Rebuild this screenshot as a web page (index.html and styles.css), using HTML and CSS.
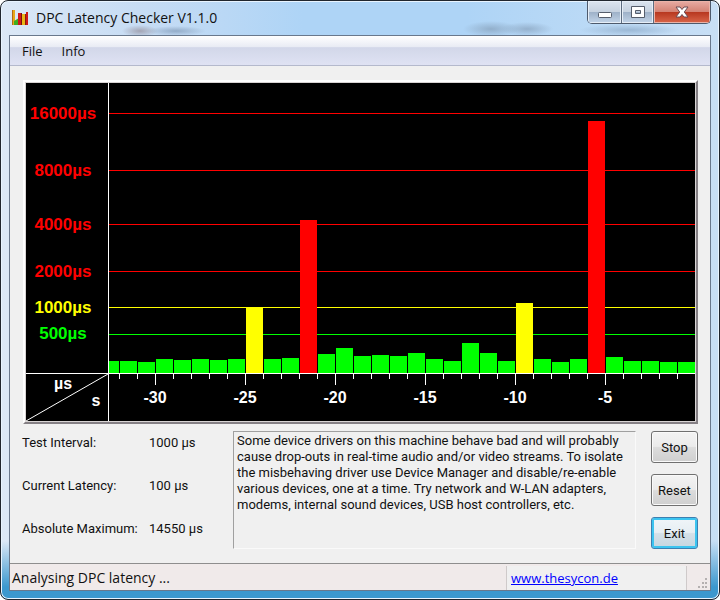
FILE: index.html
```html
<!DOCTYPE html>
<html lang="en">
<head>
  <meta charset="UTF-8">
  <meta name="viewport" content="width=device-width, initial-scale=1.0">
  <title>DPC Latency Checker V1.1.0</title>
  <link rel="stylesheet" href="styles.css">
</head>
<body>

  <div class="window">
    <header class="titlebar">
      <svg class="app-icon" width="18" height="18" viewBox="0 0 18 18">
        <path d="M1 1h3v15h-3z" fill="#e8a818"/>
        <path d="M1 1h1v15h-1z" fill="#b06a18"/>
        <path d="M3 12l5-3v7h-5z" fill="#3fae20"/>
        <path d="M7 4h3v12h-3zM15 3h2v13h-2z" fill="#d01818"/>
        <path d="M10 4h1v12h-1z" fill="#7a1010"/>
        <path d="M11 5h3v11h-3z" fill="#e8b818"/>
        <path d="M14 5h1v11h-1z" fill="#8a1a10"/>
      </svg>
      <h1>DPC Latency Checker V1.1.0</h1>
      <div class="window-controls">
        <button type="button" class="control minimize" aria-label="Minimize">
          <svg width="16" height="16" viewBox="0 0 16 16"><rect x="1.5" y="8.5" width="13" height="5" rx="1" fill="#fff" stroke="#555d6b"/></svg>
        </button>
        <button type="button" class="control maximize" aria-label="Maximize">
          <svg width="16" height="16" viewBox="0 0 16 16"><path d="M1.5 2.5h13v11h-13zM5.5 6.5v3h5v-3z" fill="#fff" fill-rule="evenodd" stroke="#555d6b"/></svg>
        </button>
        <button type="button" class="control close" aria-label="Close">
          <svg width="16" height="16" viewBox="0 0 16 16"><path d="M2 3h4l2 2.500 2-2.500h4l-3.700 5 3.700 5h-4l-2-2.500-2 2.500h-4l3.700-5z" fill="#fff" stroke="#6b4a52"/></svg>
        </button>
      </div>
    </header>

    <div class="client">
      <nav class="menu">
        <button type="button">File</button>
        <button type="button">Info</button>
      </nav>

      <main class="content">
        <div class="chart-frame">
          <svg id="chart" class="chart" viewBox="0 0 669 338" role="img" aria-label="DPC latency over time">
            <g class="red">
              <rect x="82" y="30" width="587" height="1"/>
              <rect x="82" y="87" width="587" height="1"/>
              <rect x="82" y="141" width="587" height="1"/>
              <rect x="82" y="188" width="587" height="1"/>
              <text x="37" y="36">16000µs</text>
              <text x="37" y="93">8000µs</text>
              <text x="37" y="147">4000µs</text>
              <text x="37" y="194">2000µs</text>
            </g>
            <g class="yellow">
              <rect x="82" y="224" width="587" height="1"/>
              <text x="37" y="230">1000µs</text>
            </g>
            <g class="green">
              <rect x="82" y="251" width="587" height="1"/>
              <text x="37" y="256">500µs</text>
            </g>
            <g id="bars"></g>
            <g id="axis" class="axis">
              <rect x="82" y="0" width="1" height="338"/>
              <rect x="0" y="290" width="669" height="1"/>
              <line x1="0" x2="82" y1="338" y2="291"/>
              <text x="37" y="306">µs</text>
              <text x="70" y="323">s</text>
            </g>
          </svg>
        </div>

        <section class="details">
          <dl class="readings">
            <dt>Test Interval:</dt><dd>1000 µs</dd>
            <dt>Current Latency:</dt><dd>100 µs</dd>
            <dt>Absolute Maximum:</dt><dd>14550 µs</dd>
          </dl>
          <p class="message">Some device drivers on this machine behave bad and will probably cause drop-outs in real-time audio and/or video streams. To isolate the misbehaving driver use Device Manager and disable/re-enable various devices, one at a time. Try network and W-LAN adapters, modems, internal sound devices, USB host controllers, etc.</p>
          <div class="actions">
            <button type="button">Stop</button>
            <button type="button">Reset</button>
            <button type="button" class="default">Exit</button>
          </div>
        </section>
      </main>

      <footer class="statusbar">
        <span class="status-text">Analysing DPC latency ...</span>
        <span class="status-link"><a href="http://www.thesycon.de">www.thesycon.de</a></span>
        <span class="status-grip">
          <svg width="10" height="10" viewBox="0 0 10 10" fill="#b4b0b0"><path d="M7 0h2v2h-2zM4 4h2v2h-2zM7 4h2v2h-2zM0 8h2v2h-2zM4 8h2v2h-2zM7 8h2v2h-2z"/></svg>
        </span>
      </footer>
    </div>
  </div>

  <script src="chart.js"></script>
</body>
</html>
```
FILE: styles.css
```css
* {
  box-sizing: border-box;
}
body {
  margin: 0;
  background: #fff;
  color: #111;
  font-family: "Open Sans", "Noto Sans", sans-serif;
  font-size: 13px;
}
button {
  font: inherit;
  color: inherit;
}
.window {
  display: flex;
  flex-direction: column;
  min-height: 100vh;
  padding: 0 8px 8px;
  border: 1px solid #20262e;
  border-radius: 8px;
  background:
    radial-gradient(ellipse 18px 6px at 139px 30px, #a3a5b4 0%, transparent 100%),
    radial-gradient(ellipse 30px 5px at 175px 30px, #93acc8 0%, transparent 100%),
    radial-gradient(ellipse 28px 8px at 490px 28px, #92afcb 0%, transparent 100%),
    radial-gradient(ellipse 26px 7px at 526px 28px, #95b1cd 0%, transparent 100%),
    radial-gradient(ellipse 50px 6px at 628px 29px, #9bb8d5 0%, transparent 100%),
    linear-gradient(to bottom, transparent 540px, #3c98ce 98%),
    linear-gradient(to right, #dce8f6 0, #c6dcf4 20%, #aed4f6 42%, #aed4f6 65%, #c8dff5 100%);
  box-shadow: inset 0 0 0 1px #e8f4ff;
}
.titlebar {
  display: flex;
  align-items: center;
  height: 34px;
}
.app-icon {
  margin-left: 2px;
}
h1 {
  flex: 1;
  margin: 0 0 2px 7px;
  font-size: 14px;
  font-weight: 400;
  white-space: nowrap;
}
.window-controls {
  display: flex;
  align-self: flex-start;
  height: 23px;
  border: 1px solid #4e5a6c;
  border-top: 0;
  border-radius: 0 0 5px 5px;
  overflow: hidden;
}
.control {
  display: flex;
  align-items: center;
  justify-content: center;
  width: 34px;
  padding: 0;
  border: 0;
  border-right: 1px solid #5d6c80;
  background: linear-gradient(to bottom, #dbe4ef 0%, #c6d2e0 48%, #9fb2c9 52%, #c2d4e8 100%);
  box-shadow: inset 0 0 0 1px #e6eef7;
}
.control.maximize {
  width: 32px;
}
.control.close {
  width: 56px;
  border-right: 0;
  background: linear-gradient(to bottom, #e8aca4 0%, #d48375 48%, #b83820 52%, #d9664a 100%);
  box-shadow: inset 0 0 0 1px #eab3a8;
}
.client {
  flex: 1;
  display: flex;
  flex-direction: column;
  border: 1px solid #69788c;
  background: #f0f0f0;
}
.menu {
  display: flex;
  height: 30px;
  padding-left: 4px;
  border-bottom: 1px solid #b4b9cc;
  background: linear-gradient(to bottom, #fff 0%, #e8ebf4 38%, #d2d7e9 40%, #dfe2f3 100%);
}
.menu button {
  padding: 0 8px;
  border: 0;
  background: none;
  font-size: 13px;
}
.menu button + button {
  margin-left: 3px;
}
.content {
  flex: 1;
  display: flex;
  flex-direction: column;
  padding: 14px 12px 0;
}
.chart-frame {
  margin-left: 1px;
  padding: 1px;
  border: 2px solid #fff;
  border-right-color: #858085;
  border-bottom-color: #858085;
  background: #d8d4d4;
}
.chart {
  display: block;
  width: 100%;
  background: #000;
  font-family: "Liberation Sans", Arial, sans-serif;
  font-size: 17px;
  font-weight: 700;
  text-anchor: middle;
}
.chart rect {
  shape-rendering: crispEdges;
}
.red {
  fill: #f00;
}
.yellow {
  fill: #ff0;
}
.green {
  fill: #0f0;
}
.axis {
  fill: #fff;
  font-size: 16px;
}
.axis line {
  stroke: #fff;
}
.details {
  display: flex;
  padding: 7px 0 14px;
  font-family: Roboto, sans-serif;
}
.readings {
  display: grid;
  grid-template-columns: 127px 84px;
  align-content: start;
  row-gap: 23px;
  margin: 0;
  padding-top: 2px;
  line-height: 20px;
}
.readings dd {
  margin: 0;
}
.message {
  flex: 1;
  margin: 0;
  padding: 1px 3px;
  border: 1px solid #fafafa;
  border-top-color: #a0a0a0;
  border-left-color: #a0a0a0;
  line-height: 16px;
}
.actions {
  display: flex;
  flex-direction: column;
  gap: 11px;
  margin-left: 15px;
}
.actions button {
  width: 47px;
  height: 32px;
  padding: 0;
  border: 1px solid #707070;
  border-radius: 3px;
  background: linear-gradient(to bottom, #f3f3f3 0%, #ebebeb 48%, #dcdcdc 52%, #cfcfcf 100%);
  box-shadow: inset 0 0 0 1px #fafafa;
}
.actions .default {
  border-color: #3c7fb1;
  background: linear-gradient(to bottom, #f0f5f8 0%, #e6eef3 48%, #d4e0e8 52%, #c6d6e0 100%);
  box-shadow: inset 0 0 0 2px #3cc4f0;
}
.statusbar {
  display: flex;
  align-items: stretch;
  height: 27px;
  border-top: 1px solid #8e8e8e;
  background: #f0eaea;
  font-size: 14px;
  line-height: 28px;
}
.status-text {
  flex: 1;
  padding-left: 2px;
}
.status-link {
  width: 181px;
  margin-top: 2px;
  padding-left: 4px;
  border-left: 1px solid #cfcaca;
  border-right: 1px solid #cfcaca;
  background: #f0f0f0;
  font-size: 13px;
  line-height: 24px;
}
.status-link a {
  color: #00f;
}
.status-grip {
  display: flex;
  align-items: flex-end;
  justify-content: flex-end;
  width: 23px;
  padding: 0 2px 2px 0;
}
```
FILE: chart.js
```js
const SVG_NS = 'http://www.w3.org/2000/svg';
const BASELINE = 290;
const STEP = 18;
const FIRST_BAR = 94;

// bar heights from oldest to newest, one per second
const samples = [
  12, 11, 14, 13, 14, 13, 14, 65, 14, 15, 153, 19, 25, 17, 18, 17,
  20, 14, 12, 30, 20, 12, 70, 14, 11, 14, 252, 16, 12, 12, 11, 11
];

const bars = document.getElementById('bars');
const axis = document.getElementById('axis');

function add(parent, name, attrs) {
  const el = document.createElementNS(SVG_NS, name);
  for (const key in attrs) {
    el.setAttribute(key, attrs[key]);
  }
  parent.appendChild(el);
  return el;
}

function level(height) {
  if (height > 100) return 'red';
  if (height > 50) return 'yellow';
  return 'green';
}

// sample that is scrolling out on the left
add(bars, 'rect', { class: 'green', x: 83, y: BASELINE - 12, width: 10, height: 12 });

samples.forEach((height, i) => {
  const x = FIRST_BAR + i * STEP;
  const second = i - samples.length;
  const major = second % 5 === 0;

  add(bars, 'rect', { class: level(height), x: x, y: BASELINE - height, width: 17, height: height });
  add(axis, 'rect', { x: x - 1, y: BASELINE, width: 1, height: major ? 12 : 6 });
  if (major) {
    add(axis, 'text', { x: x - 1, y: BASELINE + 30 }).textContent = second;
  }
});
```
